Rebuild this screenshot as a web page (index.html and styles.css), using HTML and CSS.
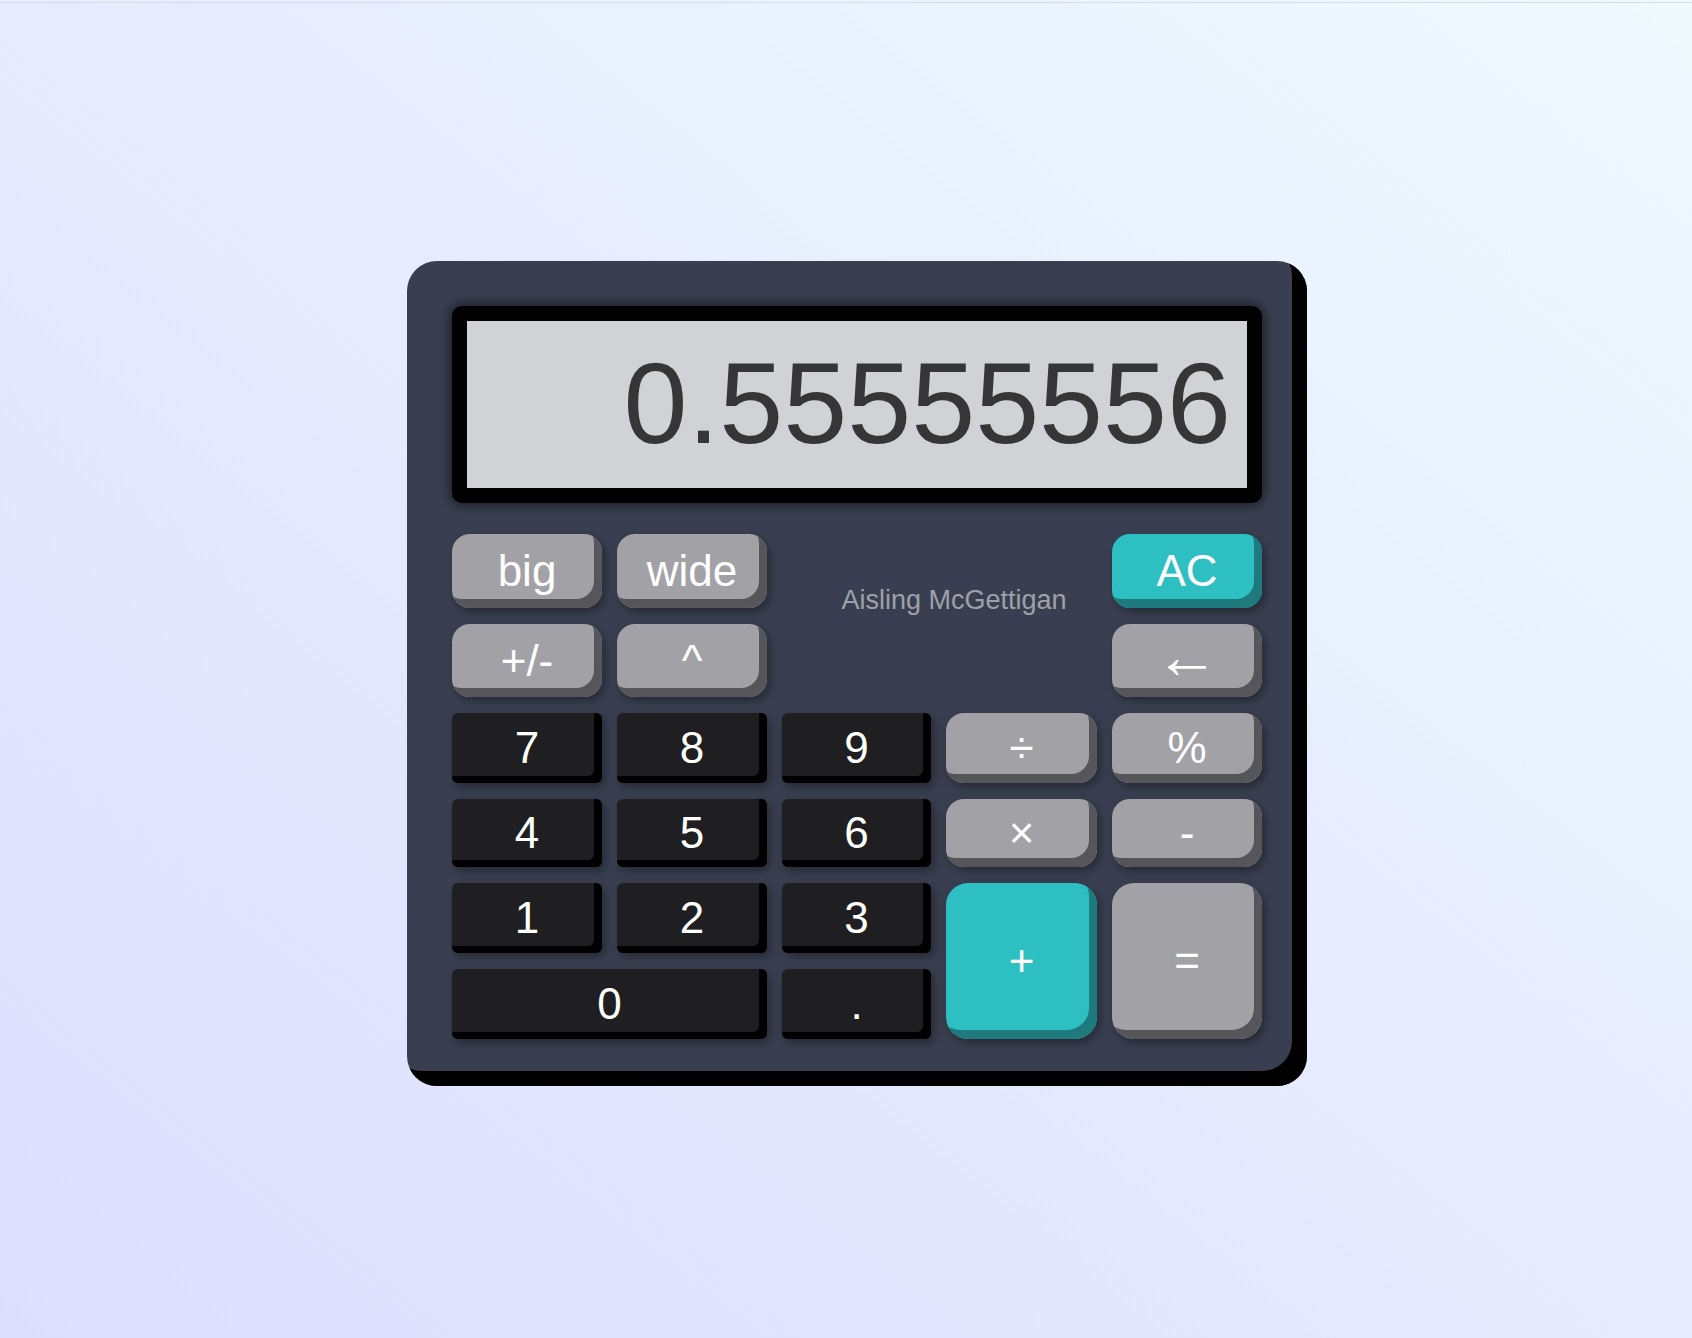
FILE: index.html
```html
<!DOCTYPE html>
<html lang="en">
<head>
<meta charset="utf-8">
<title>Calculator</title>
<link rel="stylesheet" href="styles.css">
</head>
<body>
<div class="topline"></div>
<main class="stage">
  <div class="calc">
    <div class="display"><span class="value">0.55555556</span></div>
    <div class="keys">
      <button class="key gray">big</button>
      <button class="key gray">wide</button>
      <div class="author">Aisling McGettigan</div>
      <button class="key teal">AC</button>
      <button class="key gray">+/-</button>
      <button class="key gray">^</button>
      <button class="key gray arrow">&larr;</button>
      <button class="key num">7</button>
      <button class="key num">8</button>
      <button class="key num">9</button>
      <button class="key gray">&divide;</button>
      <button class="key gray">%</button>
      <button class="key num">4</button>
      <button class="key num">5</button>
      <button class="key num">6</button>
      <button class="key gray">&times;</button>
      <button class="key gray">-</button>
      <button class="key num">1</button>
      <button class="key num">2</button>
      <button class="key num">3</button>
      <button class="key teal tall">+</button>
      <button class="key gray tall">=</button>
      <button class="key num wide">0</button>
      <button class="key num">.</button>
    </div>
  </div>
</main>
</body>
</html>
```
FILE: styles.css
```css
html, body {
  margin: 0;
  padding: 0;
}

body {
  min-height: 100vh;
  background: linear-gradient(to top right, #dddffe 0%, #e6ebfd 50%, #eefaff 100%);
  font-family: "Liberation Sans", Arial, sans-serif;
}

.topline {
  height: 1px;
  margin-top: 2px;
  background: #d8dae4;
}

.stage {
  display: flex;
  justify-content: center;
  padding: 258px 0 0 22px;
}

.calc {
  width: 900px;
  box-sizing: border-box;
  padding: 45px 45px 47px 45px;
  background: #393f50;
  border-radius: 30px;
  box-shadow: inset -15px -15px 0 #000;
}

.display {
  height: 167px;
  border: 15px solid #000;
  border-radius: 10px;
  background: #d1d2d6;
  box-shadow: 0 0 12px 2px rgba(0, 0, 0, 0.55);
  text-align: right;
  padding-right: 16px;
  font-size: 115px;
  line-height: 164px;
  color: #363636;
  white-space: nowrap;
  overflow: hidden;
}

.keys {
  margin-top: 31px;
  display: grid;
  grid-template-columns: 150px 150px 149px 151px 150px;
  grid-template-rows: 74px 73px 70px 68px 70px 70px;
  column-gap: 15px;
  row-gap: 16px;
}

.author {
  grid-column: 3 / 5;
  grid-row: 1 / 3;
  text-align: center;
  padding: 51px 0 0 29px;
  font-size: 27px;
  line-height: 31px;
  color: #9fa1a9;
  white-space: nowrap;
}

.key {
  border: 0;
  margin: 0;
  padding: 0;
  font-family: "Liberation Sans", Arial, sans-serif;
  font-size: 44px;
  color: #fff;
  cursor: pointer;
}

.arrow {
  font-size: 64px;
  line-height: 1;
  padding-bottom: 15px;
}

.gray {
  background: #a2a2a6;
  border-radius: 18px;
  box-shadow: inset -8px -9px 0 #56565a, 3px 4px 10px rgba(0, 0, 0, 0.35);
}

.teal {
  background: #2ebfc3;
  border-radius: 18px;
  box-shadow: inset -8px -9px 0 #1e7a7c, 3px 4px 10px rgba(0, 0, 0, 0.35);
}

.num {
  background: #1f1f22;
  border-radius: 6px;
  box-shadow: inset -8px -7px 0 #000, 3px 4px 10px rgba(0, 0, 0, 0.35);
}

.tall {
  grid-row: span 2;
  border-radius: 22px;
}

.wide {
  grid-column: span 2;
}
```
